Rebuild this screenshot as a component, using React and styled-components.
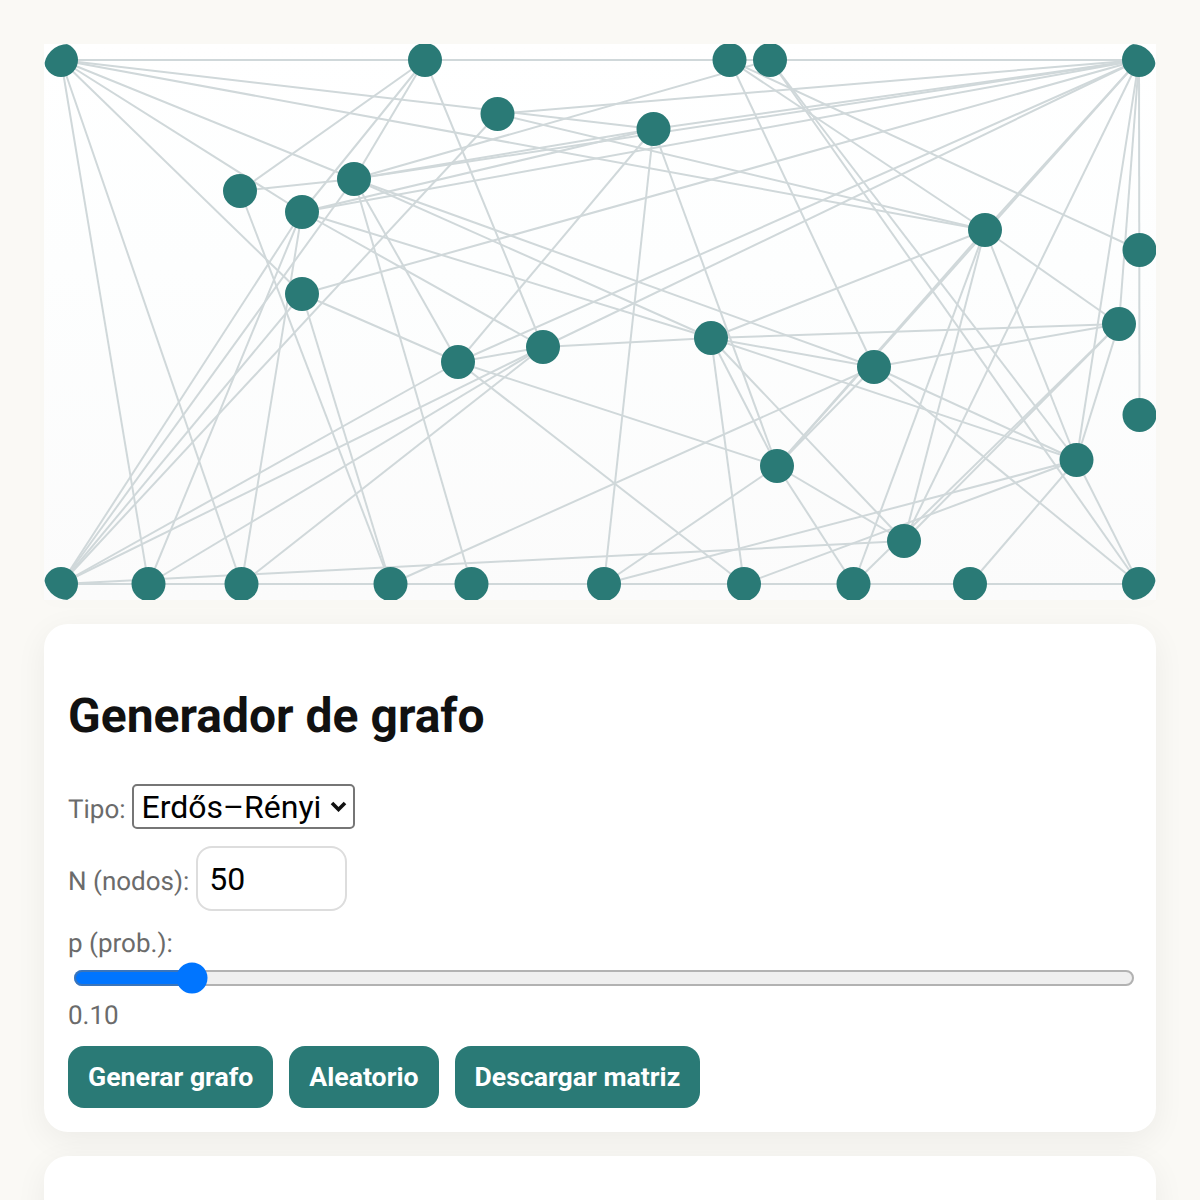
import React from 'react';
import styled, { createGlobalStyle } from 'styled-components';

const NODES = {
  A: [61, 60], B: [425, 60], C: [729.5, 60], D: [770, 60], E: [1139, 60],
  F: [497.5, 114], G: [653.5, 129], H: [240, 191], I: [354, 179], J: [302, 212],
  K: [302, 294], L: [985, 230], M: [1139.5, 250], N: [1119, 324], O: [1139.5, 415],
  P: [458, 362], Q: [543, 347], R: [711, 338], S: [874, 367], T: [777, 466],
  U: [1076.5, 460], V: [904, 541],
  a: [61, 584], b: [148.5, 584], c: [241.5, 584], d: [390.5, 584], e: [471.5, 584],
  f: [604, 584], g: [744, 584], h: [853.5, 584], i: [970, 584], j: [1139, 584],
};

const EDGES = `AE AB BC CD Ab Ac AK AJ AI AG AL FL FE Fa GE IE JG JE ID IG HI HB Hd JB IB
Ie IP JR JQ IS IR RS RU RN SN SU Sj ST TE TL LE LV Lh EV LU LN LR CS CL CM DU Dj Uj UN UE NE EO
Uf Ug iU NV Nh Th TV Tf RT GT Rg RV QR Gf GP BQ QE PE PQ Pg PT aP aQ bQ cQ KP KE Kd Ka Ja Ia Jb Jc
dS aV aj`.split(/\s+/);

const CHEVRON = `url("data:image/svg+xml,%3Csvg xmlns='http://www.w3.org/2000/svg' width='17' height='11'%3E%3Cpath d='M2 2l6.5 6.5L15 2' fill='none' stroke='%23111' stroke-width='3.6'/%3E%3C/svg%3E")`;

const Global = createGlobalStyle`
  html, body {
    margin: 0;
    height: 1200px;
    overflow: hidden;
    background: #faf9f5;
    font-family: Roboto, "Liberation Sans", sans-serif;
    text-rendering: geometricPrecision;
  }
`;

const Page = styled.main`
  display: flex;
  flex-direction: column;
  gap: 24px;
  padding: 44px 44px 0;
`;

const GraphBox = styled.div`
  height: 556px;
  background: linear-gradient(#ffffff, #fdfefe 40%, #fbfbfb);
  box-shadow: 0 4px 16px rgba(0, 0, 0, 0.01);
`;

const GraphSvg = styled.svg`
  display: block;
  width: 1112px;
  height: 556px;
  border-radius: 24px;
`;

const Card = styled.section`
  background: #fff;
  border-radius: 24px;
  padding: 24px;
  box-shadow: 0 8px 32px rgba(0, 0, 0, 0.06);
`;

const Title = styled.h2`
  margin: 41px 0 41px;
  font-size: 48px;
  line-height: 54px;
  font-weight: 700;
  color: #111;
`;

const Row = styled.div`
  display: flex;
  align-items: baseline;
  gap: 6px;
  margin-bottom: 17px;
`;

const Label = styled.label`
  font-size: 26px;
  line-height: 32px;
  color: #6b6b6b;
`;

const SliderLabel = styled(Label)`
  display: block;
`;

const TypeSelect = styled.select`
  appearance: none;
  box-sizing: border-box;
  width: 223px;
  height: 45px;
  padding: 0 0 0 8px;
  border: 2px solid #767676;
  border-radius: 5px;
  background: #fff ${CHEVRON} no-repeat right 6px center;
  font-family: Roboto, sans-serif;
  font-size: 32px;
  color: #000;
`;

const NumberInput = styled.input`
  box-sizing: border-box;
  width: 151px;
  height: 65px;
  margin-left: 1px;
  padding: 0 11px;
  border: 2px solid #ddd;
  border-radius: 16px;
  font-family: Roboto, sans-serif;
  font-size: 32px;
  color: #000;
  outline: none;
`;

const Slider = styled.input`
  zoom: 2;
  display: block;
  width: 531px;
  margin: 1px 2px 2px 2.5px;
  padding: 0;
`;

const Value = styled.div`
  font-size: 26px;
  line-height: 32px;
  color: #6b6b6b;
  margin-top: 6px;
`;

const Buttons = styled.div`
  display: flex;
  gap: 16px;
  margin-top: 14px;
`;

const Button = styled.button`
  height: 62px;
  padding: 0 20px;
  border: 0;
  border-radius: 16px;
  background: #2a7a76;
  color: #fff;
  font-family: Roboto, sans-serif;
  font-size: 26.67px;
  font-weight: 700;
`;

const EmptyCard = styled(Card)`
  height: 120px;
`;

function Graph() {
  return (
    <GraphBox>
      <GraphSvg viewBox="44 44 1112 556">
        {EDGES.map((edge) => {
          const [x1, y1] = NODES[edge[0]];
          const [x2, y2] = NODES[edge[1]];
          return <line key={edge} x1={x1} y1={y1} x2={x2} y2={y2} stroke="#d0d8da" strokeWidth="2" />;
        })}
        {Object.entries(NODES).map(([id, [cx, cy]]) => (
          <circle key={id} cx={cx} cy={cy} r="17" fill="#2a7a76" />
        ))}
      </GraphSvg>
    </GraphBox>
  );
}

export default function App() {
  return (
    <Page>
      <Global />
      <Graph />
      <Card>
        <Title>Generador de grafo</Title>
        <Row>
          <Label htmlFor="tipo">Tipo:</Label>
          <TypeSelect id="tipo" defaultValue="er">
            <option value="er">Erdős–Rényi</option>
          </TypeSelect>
        </Row>
        <Row>
          <Label htmlFor="n">N (nodos):</Label>
          <NumberInput id="n" defaultValue="50" />
        </Row>
        <SliderLabel htmlFor="p">p (prob.):</SliderLabel>
        <Slider id="p" type="range" min="0" max="1" step="0.01" defaultValue="0.1" />
        <Value>0.10</Value>
        <Buttons>
          <Button>Generar grafo</Button>
          <Button>Aleatorio</Button>
          <Button>Descargar matriz</Button>
        </Buttons>
      </Card>
      <EmptyCard />
    </Page>
  );
}
